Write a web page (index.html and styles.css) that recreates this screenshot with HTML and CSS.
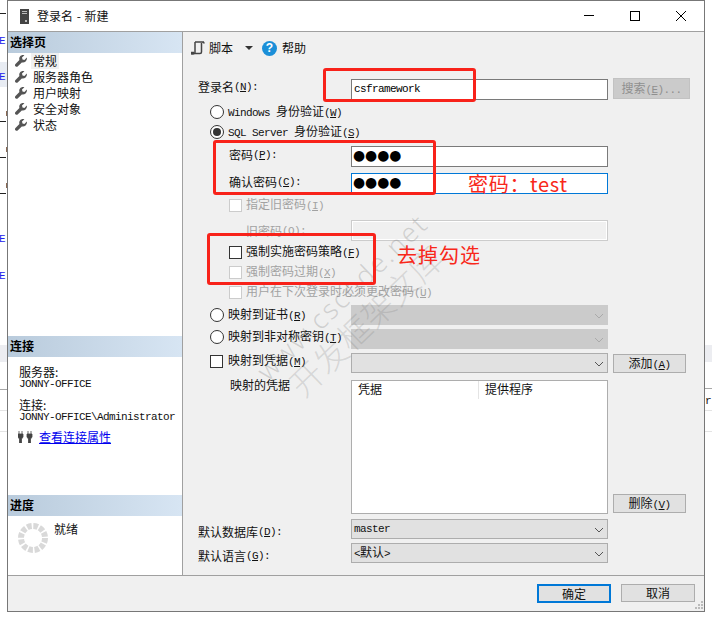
FILE: index.html
```html
<!DOCTYPE html>
<html lang="zh-CN">
<head>
<meta charset="utf-8">
<title>登录名 - 新建</title>
<link rel="stylesheet" href="styles.css">
</head>
<body>
<div class="page">
  <div class="behind">
    <span class="band band-l1"></span><span class="band band-l2"></span><span class="band band-r1"></span>
    <span class="hline hl1"></span><span class="hline hl2"></span><span class="hline hl3"></span>
    <span class="hline hr1"></span><span class="hline hr2"></span><span class="hline hr3"></span>
    <span class="dash d1"></span><span class="dash d2"></span><span class="dash d3"></span><span class="dash d4"></span>
    <span class="blob b1"></span><span class="blob b2"></span><span class="blob b3"></span>
    <span class="frag e1">E</span><span class="frag e2">E</span><span class="frag e3">E</span><span class="frag e4">E</span>
    <span class="frag-r">r</span>
  </div>

  <div class="win">
    <header class="title">
      <svg class="title-icon" width="9" height="15" viewBox="0 0 9 15"><rect width="9" height="15" fill="#444"/><path d="M2 2.5h5M2 4.5h5" stroke="#bbb"/><rect x="5" y="11" width="2" height="2" fill="#bbb"/></svg>
      <span class="title-text">登录名 - 新建</span>
      <div class="win-btns">
        <svg width="12" height="12" viewBox="0 0 12 12"><path d="M1 5.5h10" stroke="#000"/></svg>
        <svg width="12" height="12" viewBox="0 0 12 12"><rect x="1.5" y="1.5" width="9" height="9" fill="none" stroke="#000"/></svg>
        <svg width="12" height="12" viewBox="0 0 12 12"><path d="M1 1l10 10M11 1L1 11" stroke="#000"/></svg>
      </div>
    </header>

    <div class="body">
      <aside class="side">
        <section class="sec sec-pages">
          <h2 class="sec-head">选择页</h2>
          <ul class="pages">
            <li class="page-item"><svg class="wrench" viewBox="0 0 12 12"><use href="#wr"/></svg><span class="cur">常规</span></li>
            <li class="page-item"><svg class="wrench" viewBox="0 0 12 12"><use href="#wr"/></svg><span>服务器角色</span></li>
            <li class="page-item"><svg class="wrench" viewBox="0 0 12 12"><use href="#wr"/></svg><span>用户映射</span></li>
            <li class="page-item"><svg class="wrench" viewBox="0 0 12 12"><use href="#wr"/></svg><span>安全对象</span></li>
            <li class="page-item"><svg class="wrench" viewBox="0 0 12 12"><use href="#wr"/></svg><span>状态</span></li>
          </ul>
        </section>
        <section class="sec sec-conn">
          <h2 class="sec-head">连接</h2>
          <div class="conn">
            <div class="conn-k">服务器:</div>
            <div class="conn-v"><span class="m">JONNY-OFFICE</span></div>
            <div class="conn-k gap">连接:</div>
            <div class="conn-v"><span class="m">JONNY-OFFICE\Administrator</span></div>
            <div class="conn-link">
              <svg width="15" height="12" viewBox="0 0 15 12"><path d="M1 0v3M4 0v3M0 3h5v3l-1.5 2v4h-2V8L0 6zM10 0v3M13 0v3M9 3h5v3l-1.5 2v4h-2V8L9 6z" fill="#444" stroke="#444" stroke-width=".8"/></svg>
              <a class="link" href="#">查看连接属性</a>
            </div>
          </div>
        </section>
        <section class="sec sec-prog">
          <h2 class="sec-head">进度</h2>
          <div class="prog">
            <svg width="30" height="30" viewBox="0 0 30 30"><circle cx="15" cy="15" r="12" fill="none" stroke="#d9d9d9" stroke-width="6" stroke-dasharray="4.6 1.68"/></svg>
            <span class="prog-text">就绪</span>
          </div>
        </section>
      </aside>

      <main class="main">
        <div class="toolbar">
          <svg class="tb-script" width="14" height="14" viewBox="0 0 14 14"><path d="M4 1h9M4 1v10c0 1.500-1 2-2 2H1c-.8 0-1-.5-1-1.500h3M4 12.500h5c1 0 1.500-.5 1.500-1.500V2M11 1c1 0 2 .5 2 1.500" fill="none" stroke="#444" stroke-width="1.500"/></svg>
          <span class="tb-label">脚本</span>
          <svg class="tb-caret" width="8" height="4" viewBox="0 0 8 4"><path d="M0 0h8L4 4z" fill="#333"/></svg>
          <span class="tb-help">?</span>
          <span class="tb-label">帮助</span>
        </div>

        <div class="form">
          <div class="row r1">
            <label class="lbl up">登录名<span class="m">(<u>N</u>):</span></label>
            <div class="input input-login"><span class="m">csframework</span></div>
            <button class="btn btn-off btn-search" type="button">搜索<span class="m">(<u>E</u>)...</span></button>
          </div>
          <div class="row r2"><span class="radio"></span><span><span class="m">Windows </span>身份验证<span class="m">(<u>W</u>)</span></span></div>
          <div class="row r3"><span class="radio on"></span><span><span class="m">SQL Server </span>身份验证<span class="m">(<u>S</u>)</span></span></div>
          <div class="row r4">
            <label class="lbl lbl-in up">密码<span class="m">(<u>P</u>):</span></label>
            <div class="input"><span class="dots">●●●●</span></div>
          </div>
          <div class="row r5">
            <label class="lbl lbl-in up">确认密码<span class="m">(<u>C</u>):</span></label>
            <div class="input input-focus"><span class="dots">●●●●</span></div>
          </div>
          <div class="row r6 off"><span class="chk chk-off chk-in"></span><span>指定旧密码<span class="m">(<u>I</u>)</span></span></div>
          <div class="row r7">
            <label class="lbl lbl-old off">旧密码<span class="m">(<u>O</u>):</span></label>
            <div class="input input-off"></div>
          </div>
          <div class="row r8"><span class="chk chk-in"></span><span>强制实施密码策略<span class="m">(<u>F</u>)</span></span></div>
          <div class="row r9 off"><span class="chk chk-off chk-in"></span><span>强制密码过期<span class="m">(<u>X</u>)</span></span></div>
          <div class="row r10 off"><span class="chk chk-off chk-in"></span><span>用户在下次登录时必须更改密码<span class="m">(<u>U</u>)</span></span></div>
          <div class="row r11">
            <label class="lbl lbl-opt"><span class="radio"></span><span>映射到证书<span class="m">(<u>R</u>)</span></span></label>
            <div class="select select-off"><svg class="chev" width="10" height="6" viewBox="0 0 10 6"><path d="M1 1l4 4 4-4" fill="none" stroke="#aaa"/></svg></div>
          </div>
          <div class="row r12">
            <label class="lbl lbl-opt up"><span class="radio"></span><span>映射到非对称密钥<span class="m">(<u>T</u>)</span></span></label>
            <div class="select select-off"><svg class="chev" width="10" height="6" viewBox="0 0 10 6"><path d="M1 1l4 4 4-4" fill="none" stroke="#aaa"/></svg></div>
          </div>
          <div class="row r13">
            <label class="lbl lbl-opt up"><span class="chk"></span><span>映射到凭据<span class="m">(<u>M</u>)</span></span></label>
            <div class="select"><svg class="chev" width="10" height="6" viewBox="0 0 10 6"><path d="M1 1l4 4 4-4" fill="none" stroke="#555"/></svg></div>
            <button class="btn btn-add" type="button">添加<span class="m">(<u>A</u>)</span></button>
          </div>
          <div class="row r14">
            <label class="lbl lbl-map">映射的凭据</label>
            <div class="grid-box">
              <div class="grid-head">
                <span class="col col-a">凭据</span>
                <span class="col col-b">提供程序</span>
              </div>
            </div>
            <button class="btn btn-del" type="button">删除<span class="m">(<u>V</u>)</span></button>
          </div>
          <div class="row r15">
            <label class="lbl down">默认数据库<span class="m">(<u>D</u>):</span></label>
            <div class="select"><span class="m">master</span><svg class="chev" width="10" height="6" viewBox="0 0 10 6"><path d="M1 1l4 4 4-4" fill="none" stroke="#555"/></svg></div>
          </div>
          <div class="row r16">
            <label class="lbl down">默认语言<span class="m">(<u>G</u>):</span></label>
            <div class="select"><span><span class="m">&lt;</span>默认<span class="m">&gt;</span></span><svg class="chev" width="10" height="6" viewBox="0 0 10 6"><path d="M1 1l4 4 4-4" fill="none" stroke="#555"/></svg></div>
          </div>
        </div>
      </main>
    </div>

    <footer class="foot">
      <button class="btn btn-ok" type="button">确定</button>
      <button class="btn btn-cancel" type="button">取消</button>
      <svg class="grip" width="8" height="8" viewBox="0 0 8 8"><path d="M6 0h2v2H6zM3 3h2v2H3zM6 3h2v2H6zM0 6h2v2H0zM3 6h2v2H3zM6 6h2v2H6z" fill="#bbb"/></svg>
    </footer>
  </div>

  <div class="mark mark-a">www.cscode.net</div>
  <div class="mark mark-b">开发框架文库</div>
  <div class="redbox rb1"></div>
  <div class="redbox rb2"></div>
  <div class="redbox rb3"></div>
  <div class="note note-a">密码：test</div>
  <div class="note note-b">去掉勾选</div>

  <svg class="defs" width="0" height="0"><defs>
    <path id="wr" d="M11.800 2.600 9.400 5 7.500 4.500 7 2.600 9.400.3C7.800-.3 6 .2 5 1.500 4.200 2.500 4 3.800 4.400 5L.5 8.900c-.7.700-.7 1.700 0 2.400s1.700.7 2.400 0l3.900-3.900c1.300.4 2.700.1 3.800-.9 1.200-1.100 1.600-2.600 1.200-3.900z" fill="#555"/>
  </defs></svg>
</div>
</body>
</html>
```

FILE: styles.css
```css
* { box-sizing: border-box; }
html, body { margin: 0; padding: 0; }
body {
  font-family: "Noto Sans CJK SC", "Noto Sans", sans-serif;
  font-size: 12px;
  line-height: 16px;
  color: #111;
  background: #fff;
}
.page { position: relative; width: 712px; height: 619px; overflow: hidden; background: #fff; }
.m { font-family: "Liberation Mono", monospace; font-size: 11px; letter-spacing: -0.6px; }

/* window fragments showing behind the dialog */
.behind span { position: absolute; }
.band { background: #e8ecf3; }
.band-l1 { left: 0; top: 62px; width: 7px; height: 25px; }
.band-l2 { left: 0; top: 345px; width: 7px; height: 17px; background: #ecedf1; }
.band-r1 { left: 705px; top: 345px; width: 7px; height: 17px; background: #ecedf1; }
.hline { height: 1px; width: 7px; background: #e4e4e4; }
.hl1 { left: 0; top: 389px; background: #a8a8a8; }
.hl2 { left: 0; top: 410px; }
.hl3 { left: 0; top: 431px; }
.hr1 { left: 705px; top: 388px; background: #a8a8a8; }
.hr2 { left: 705px; top: 410px; }
.hr3 { left: 705px; top: 431px; }
.dash { left: 0; width: 6px; height: 1px; background: #222; }
.d1 { top: 13px; }
.d2 { top: 121px; }
.d3 { top: 157px; }
.d4 { top: 193px; }
.blob { left: 6px; width: 1px; height: 5px; background: #8a6a55; }
.b1 { top: 111px; }
.b2 { top: 147px; }
.b3 { top: 183px; }
.frag { left: -1px; width: 7px; overflow: hidden; color: #2222ee; font-family: "Liberation Mono", monospace; font-size: 11px; line-height: 12px; }
.e1 { top: 35px; }
.e2 { top: 71px; }
.e3 { top: 233px; }
.e4 { top: 270px; }
.frag-r { left: 705px; top: 395px; font-family: "Liberation Mono", monospace; font-size: 11px; line-height: 12px; }

/* dialog */
.win {
  position: absolute;
  left: 7px;
  top: 0;
  width: 698px;
  height: 612px;
  display: flex;
  flex-direction: column;
  border: 1px solid #777;
  background: #fff;
}
.title { height: 31px; flex: none; display: flex; align-items: center; padding-left: 12px; background: #fff; border-bottom: 1px solid #a0a0a0; }
.title-icon { margin-right: 8px; }
.title-text { font-size: 12px; word-spacing: 1px; }
.win-btns { margin-left: auto; display: flex; gap: 34px; padding-right: 17px; margin-top: -1px; }
.win-btns svg { display: block; }
.body { flex: 1; min-height: 0; display: flex; }

/* left column */
.side { width: 175px; flex: none; display: flex; flex-direction: column; background: #fff; border-right: 1px solid #a0a0a0; }
.sec-pages { height: 304px; }
.sec-conn { height: 159px; }
.sec-prog { flex: 1; }
.sec-head { margin: 0; height: 21px; padding-left: 2px; font-size: 12px; font-weight: 700; line-height: 20px; color: #000; background: linear-gradient(90deg, #b9cbdc, #d7e5f3); }
.pages { list-style: none; margin: 0; padding: 0; }
.page-item { height: 16px; display: flex; align-items: center; padding-left: 7px; }
.wrench { width: 12px; height: 12px; margin-right: 4px; flex: none; }
.page-item span { padding: 0 2px 0 2px; }
.cur { background: #f0f0f0; }
.conn { padding: 9px 0 0 11px; }
.conn-k { height: 11px; line-height: 11px; }
.conn-v { height: 11px; line-height: 11px; font-size: 11px; }
.gap { margin-top: 11px; }
.conn-link { display: flex; align-items: center; gap: 6px; margin-top: 8px; margin-left: -1px; height: 16px; }
.link { color: #0000ee; text-decoration: underline; }
.prog { display: flex; align-items: flex-start; gap: 6px; padding: 7px 0 0 10px; }
.prog svg { display: block; }
.prog-text { margin-top: -2px; }

/* right column */
.main { flex: 1; min-width: 0; background: #f0f0f0; }
.toolbar { height: 32px; display: flex; align-items: center; padding-left: 8px; }
.tb-script { margin-right: 4px; }
.tb-caret { margin: 0 9px 0 12px; }
.tb-help { width: 15px; height: 15px; margin-right: 5px; border-radius: 50%; background: #1b8fd8; color: #fff; font-family: "Liberation Sans", sans-serif; font-weight: 700; font-size: 12px; line-height: 15px; text-align: center; }
.form { padding: 14px 0 0 15px; }
.row { display: flex; align-items: center; height: 20px; }
.r1 { height: 22px; }
.r2 { margin-top: 2px; padding-left: 12px; }
.r3 { padding-left: 12px; }
.r4 { margin-top: 4px; height: 21px; }
.r5 { margin-top: 6px; height: 21px; }
.r6 { margin-top: 1px; }
.r7 { margin-top: 5px; height: 21px; }
.r8 { margin-top: 1px; }
.r6, .r8, .r9, .r10 { padding-left: 31px; }
.r11 { margin-top: 3px; }
.r12 { margin-top: 4px; }
.r13 { margin-top: 4px; }
.r14 { margin-top: 7px; height: 134px; align-items: flex-start; }
.r15 { margin-top: 5px; }
.r16 { margin-top: 4px; }

.lbl { width: 153px; flex: none; display: flex; align-items: center; white-space: nowrap; }
.up { margin-bottom: 4px; }
.down { margin-top: 6px; }
.lbl-in { padding-left: 31px; }
.lbl-old { padding-left: 48px; }
.lbl-opt { padding-left: 12px; }
.lbl-map { padding: 0 0 0 32px; line-height: 12px; margin-top: -1px; }
.off { color: #a2a2a2; }

.radio { width: 14px; height: 14px; flex: none; margin-right: 4px; border: 1px solid #333; border-radius: 50%; background: #fff; display: flex; align-items: center; justify-content: center; }
.radio.on::after { content: ""; width: 8px; height: 8px; border-radius: 50%; background: #333; }
.chk { width: 13px; height: 13px; flex: none; margin-right: 5px; border: 1px solid #333; background: #fff; }
.chk-in { margin-right: 4px; }
.chk-off { border-color: #ccc; }

.input { width: 257px; height: 21px; flex: none; display: flex; align-items: center; padding: 0 0 2px 2px; background: #fff; border: 1px solid #7a7a7a; color: #000; }
.input-login { margin-top: 1px; }
.input-focus { border-color: #0078d7; }
.input-off { background: #f0f0f0; border-color: #ccc; box-shadow: inset 0 0 0 1px #fff; }
.dots { margin: 0 0 2px -1px; font-family: "DejaVu Sans", sans-serif; font-size: 13.900px; line-height: 16px; color: #000; }

.select { position: relative; width: 257px; height: 20px; flex: none; display: flex; align-items: center; padding-left: 2px; background: #e1e1e1; border: 1px solid #adadad; }
.select-off { background: #cbcbcb; border-color: #cbcbcb; }
.chev { position: absolute; right: 3px; top: 7px; }

.btn { font: inherit; color: #111; padding: 0; background: #e1e1e1; border: 1px solid #adadad; }
.btn-search { width: 77px; height: 21px; margin-left: 5px; margin-bottom: 1px; background: #cbcbcb; border-color: #c2c2c2; color: #8f8f8f; }
.btn-add { width: 73px; height: 19px; margin-left: 5px; }
.btn-del { width: 73px; height: 19px; margin: 114px 0 0 5px; }
.grid-box { width: 257px; height: 134px; flex: none; background: #fff; border: 1px solid #adadad; }
.grid-head { display: flex; height: 18px; }
.col { display: block; padding-left: 6px; line-height: 16px; border-right: 1px solid #e4e4e4; }
.col-a { width: 127px; }
.col-b { flex: 1; border-right: 0; }

.foot { position: relative; height: 36px; flex: none; padding: 8px 9px 0 0; display: flex; justify-content: flex-end; align-items: flex-start; gap: 10px; background: #f0f0f0; border-top: 1px solid #a0a0a0; }
.btn-ok { width: 74px; height: 19px; border: 2px solid #0078d7; line-height: 15px; }
.btn-cancel { width: 74px; height: 18px; line-height: 16px; }
.grip { position: absolute; right: 1px; bottom: 2px; }

/* overlays */
.mark { position: absolute; white-space: nowrap; color: rgba(110, 110, 110, .25); transform: rotate(-44deg); transform-origin: left center; pointer-events: none; }
.mark-a { left: 261px; top: 360px; font-family: "Noto Sans", sans-serif; font-weight: 300; font-size: 27px; line-height: 30px; letter-spacing: 2px; }
.mark-b { left: 294px; top: 371px; font-size: 33px; font-weight: 300; line-height: 36px; color: rgba(110, 110, 110, .2); }
.redbox { position: absolute; border: 3px solid #f8221a; border-radius: 3px; pointer-events: none; }
.rb1 { left: 323px; top: 68px; width: 153px; height: 34px; }
.rb2 { left: 213px; top: 140px; width: 223px; height: 55px; }
.rb3 { left: 207px; top: 233px; width: 169px; height: 52px; }
.note { position: absolute; color: #f8281a; font-size: 20px; line-height: 24px; white-space: nowrap; }
.note-a { left: 468px; top: 172px; letter-spacing: .7px; }
.note-b { left: 397px; top: 243px; letter-spacing: 1px; }
.defs { position: absolute; }
```
